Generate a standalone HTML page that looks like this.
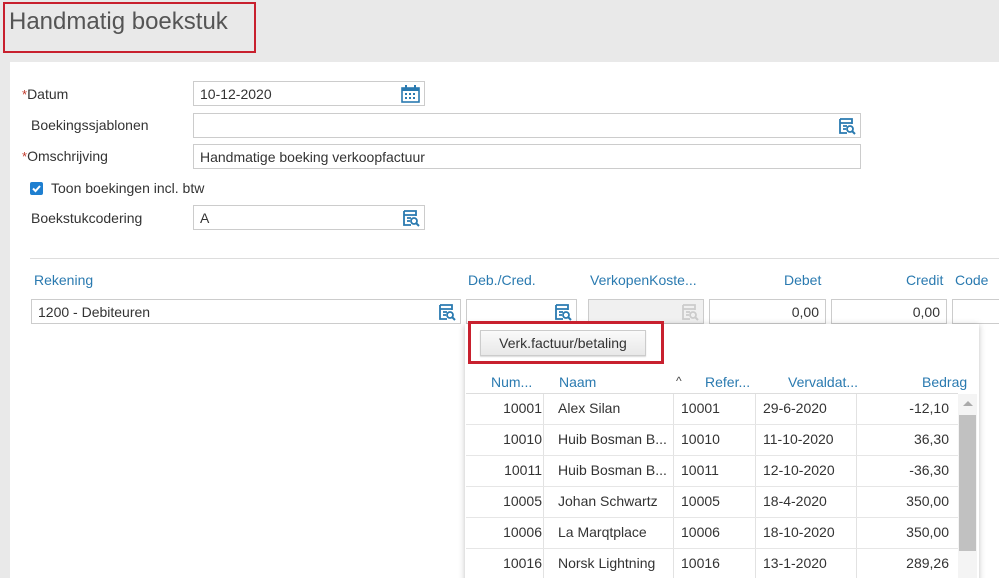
<!DOCTYPE html>
<html><head><meta charset="utf-8"><style>
*{box-sizing:border-box;margin:0;padding:0}
html,body{width:999px;height:578px;overflow:hidden}
body{background:#e9e9e9;font-family:"Liberation Sans",sans-serif;font-size:14px;color:#333;position:relative}
.a{position:absolute}
.panel{left:10px;top:62px;width:989px;height:530px;background:#fff}
.inp{position:absolute;border:1px solid #ccc;background:#fff;height:25px;padding:4px 6px;font-size:14px;white-space:nowrap}
.lbl{position:absolute;font-size:14px}
.st{color:#c0392b;font-size:13px}
.h{position:absolute;color:#2a7ab0;font-size:14px}
.ic{position:absolute;right:4px;top:3px}
.cell{position:absolute;font-size:14px}
</style></head><body>
<div class="a panel"></div>
<div class="a" style="left:3px;top:2px;width:253px;height:51px;border:2px solid #c8202e"></div>
<div class="a" style="left:9px;top:8px;font-size:24px;color:#555">Handmatig boekstuk</div>

<div class="lbl" style="left:22px;top:86px"><span class="st">*</span>Datum</div>
<div class="inp" style="left:193px;top:81px;width:232px">10-12-2020
<svg class="ic" width="19" height="18" viewBox="0 0 19 18"><rect x="1" y="3" width="17" height="14" fill="none" stroke="#2a7ab0" stroke-width="1.6"/><rect x="1" y="3" width="17" height="3" fill="#2a7ab0"/><rect x="4" y="0" width="2" height="4" fill="#2a7ab0"/><rect x="13" y="0" width="2" height="4" fill="#2a7ab0"/><g fill="#2a7ab0"><rect x="4" y="8" width="2" height="2"/><rect x="8" y="8" width="2" height="2"/><rect x="12" y="8" width="2" height="2"/><rect x="4" y="12" width="2" height="2"/><rect x="8" y="12" width="2" height="2"/><rect x="12" y="12" width="2" height="2"/></g></svg></div>

<div class="lbl" style="left:31px;top:117px">Boekingssjablonen</div>
<div class="inp" style="left:193px;top:113px;width:668px">
<svg class="ic" width="18" height="18" viewBox="0 0 18 18"><path d="M2 2h12v5M2 2v14h7M2 6h12M5 9h4M5 12h3" fill="none" stroke="#2a7ab0" stroke-width="1.8"/><circle cx="12" cy="12" r="3" fill="none" stroke="#2a7ab0" stroke-width="1.8"/><path d="M14 14l3 3" stroke="#2a7ab0" stroke-width="2"/></svg></div>

<div class="lbl" style="left:22px;top:148px"><span class="st">*</span>Omschrijving</div>
<div class="inp" style="left:193px;top:144px;width:668px">Handmatige boeking verkoopfactuur</div>

<div class="a" style="left:30px;top:182px;width:13px;height:13px;background:#1e7fd0;border-radius:2px"><svg width="13" height="13"><path d="M3 6.5l2.5 2.5 4.5-5" stroke="#fff" stroke-width="2" fill="none"/></svg></div>
<div class="lbl" style="left:51px;top:180px">Toon boekingen incl. btw</div>

<div class="lbl" style="left:31px;top:210px">Boekstukcodering</div>
<div class="inp" style="left:193px;top:205px;width:232px">A
<svg class="ic" width="18" height="18" viewBox="0 0 18 18"><path d="M2 2h12v5M2 2v14h7M2 6h12M5 9h4M5 12h3" fill="none" stroke="#2a7ab0" stroke-width="1.8"/><circle cx="12" cy="12" r="3" fill="none" stroke="#2a7ab0" stroke-width="1.8"/><path d="M14 14l3 3" stroke="#2a7ab0" stroke-width="2"/></svg></div>

<div class="a" style="left:30px;top:258px;width:969px;height:1px;background:#ddd"></div>
<div class="h" style="left:34px;top:272px">Rekening</div>
<div class="h" style="left:468px;top:272px">Deb./Cred.</div>
<div class="h" style="left:590px;top:272px">VerkopenKoste...</div>
<div class="h" style="left:784px;top:272px">Debet</div>
<div class="h" style="left:906px;top:272px">Credit</div>
<div class="h" style="left:955px;top:272px">Code</div>

<div class="inp" style="left:31px;top:299px;width:430px;height:25px">1200 - Debiteuren
<svg class="ic" width="18" height="18" viewBox="0 0 18 18"><path d="M2 2h12v5M2 2v14h7M2 6h12M5 9h4M5 12h3" fill="none" stroke="#2a7ab0" stroke-width="1.8"/><circle cx="12" cy="12" r="3" fill="none" stroke="#2a7ab0" stroke-width="1.8"/><path d="M14 14l3 3" stroke="#2a7ab0" stroke-width="2"/></svg></div>
<div class="inp" style="left:466px;top:299px;width:111px">
<svg class="ic" width="18" height="18" viewBox="0 0 18 18"><path d="M2 2h12v5M2 2v14h7M2 6h12M5 9h4M5 12h3" fill="none" stroke="#2a7ab0" stroke-width="1.8"/><circle cx="12" cy="12" r="3" fill="none" stroke="#2a7ab0" stroke-width="1.8"/><path d="M14 14l3 3" stroke="#2a7ab0" stroke-width="2"/></svg></div>
<div class="inp" style="left:588px;top:299px;width:116px;background:#f0f0f0">
<svg class="ic" width="18" height="18" viewBox="0 0 18 18"><path d="M2 2h12v5M2 2v14h7M2 6h12M5 9h4M5 12h3" fill="none" stroke="#ccc" stroke-width="1.8"/><circle cx="12" cy="12" r="3" fill="none" stroke="#ccc" stroke-width="1.8"/><path d="M14 14l3 3" stroke="#ccc" stroke-width="2"/></svg></div>
<div class="inp" style="left:709px;top:299px;width:117px;text-align:right">0,00</div>
<div class="inp" style="left:831px;top:299px;width:116px;text-align:right">0,00</div>
<div class="inp" style="left:952px;top:299px;width:60px"></div>

<div class="a" style="left:465px;top:324px;width:514px;height:270px;background:#fff;box-shadow:0 1px 6px rgba(0,0,0,0.25)"></div>
<div class="a" style="left:468px;top:321px;width:196px;height:43px;border:3px solid #c8202e"></div>
<div class="a" style="left:480px;top:330px;width:166px;height:26px;border:1px solid #ccc;background:linear-gradient(#fafafa,#e8e8e8);text-align:center;line-height:24px;font-size:14px;box-shadow:0 1px 1px rgba(0,0,0,0.15)">Verk.factuur/betaling</div>

<div class="h" style="left:491px;top:374px">Num...</div>
<div class="h" style="left:559px;top:374px">Naam</div>
<div class="a" style="left:676px;top:374px;font-size:12px;color:#444">^</div>
<div class="h" style="left:705px;top:374px">Refer...</div>
<div class="h" style="left:788px;top:374px">Vervaldat...</div>
<div class="h" style="left:922px;top:374px">Bedrag</div>
<div class="a" style="left:466px;top:393px;width:492px;height:1px;background:#ddd"></div>
<div class="a" style="left:958px;top:394px;width:19px;height:200px;background:#f4f4f4"></div>
<div class="a" style="left:959px;top:415px;width:17px;height:136px;background:#c1c1c1"></div>
<div class="a" style="left:963px;top:401px;width:0;height:0;border-left:5px solid transparent;border-right:5px solid transparent;border-bottom:5px solid #aaa"></div>
<div class="a" style="left:543px;top:394px;width:1px;height:200px;background:#e2e2e2"></div>
<div class="a" style="left:673px;top:394px;width:1px;height:200px;background:#e2e2e2"></div>
<div class="a" style="left:755px;top:394px;width:1px;height:200px;background:#e2e2e2"></div>
<div class="a" style="left:856px;top:394px;width:1px;height:200px;background:#e2e2e2"></div>
<div class="a" style="left:466px;top:424px;width:492px;height:1px;background:#e6e6e6"></div>
<div class="a" style="left:466px;top:455px;width:492px;height:1px;background:#e6e6e6"></div>
<div class="a" style="left:466px;top:486px;width:492px;height:1px;background:#e6e6e6"></div>
<div class="a" style="left:466px;top:517px;width:492px;height:1px;background:#e6e6e6"></div>
<div class="a" style="left:466px;top:548px;width:492px;height:1px;background:#e6e6e6"></div>

<div class="cell" style="left:466px;width:76px;text-align:right;top:400px">10001</div><div class="cell" style="left:558px;top:400px">Alex Silan</div><div class="cell" style="left:681px;top:400px">10001</div><div class="cell" style="left:763px;top:400px">29-6-2020</div><div class="cell" style="left:856px;width:93px;text-align:right;top:400px">-12,10</div>
<div class="cell" style="left:466px;width:76px;text-align:right;top:431px">10010</div><div class="cell" style="left:558px;top:431px">Huib Bosman B...</div><div class="cell" style="left:681px;top:431px">10010</div><div class="cell" style="left:763px;top:431px">11-10-2020</div><div class="cell" style="left:856px;width:93px;text-align:right;top:431px">36,30</div>
<div class="cell" style="left:466px;width:76px;text-align:right;top:462px">10011</div><div class="cell" style="left:558px;top:462px">Huib Bosman B...</div><div class="cell" style="left:681px;top:462px">10011</div><div class="cell" style="left:763px;top:462px">12-10-2020</div><div class="cell" style="left:856px;width:93px;text-align:right;top:462px">-36,30</div>
<div class="cell" style="left:466px;width:76px;text-align:right;top:493px">10005</div><div class="cell" style="left:558px;top:493px">Johan Schwartz</div><div class="cell" style="left:681px;top:493px">10005</div><div class="cell" style="left:763px;top:493px">18-4-2020</div><div class="cell" style="left:856px;width:93px;text-align:right;top:493px">350,00</div>
<div class="cell" style="left:466px;width:76px;text-align:right;top:524px">10006</div><div class="cell" style="left:558px;top:524px">La Marqtplace</div><div class="cell" style="left:681px;top:524px">10006</div><div class="cell" style="left:763px;top:524px">18-10-2020</div><div class="cell" style="left:856px;width:93px;text-align:right;top:524px">350,00</div>
<div class="cell" style="left:466px;width:76px;text-align:right;top:555px">10016</div><div class="cell" style="left:558px;top:555px">Norsk Lightning</div><div class="cell" style="left:681px;top:555px">10016</div><div class="cell" style="left:763px;top:555px">13-1-2020</div><div class="cell" style="left:856px;width:93px;text-align:right;top:555px">289,26</div>
</body></html>
